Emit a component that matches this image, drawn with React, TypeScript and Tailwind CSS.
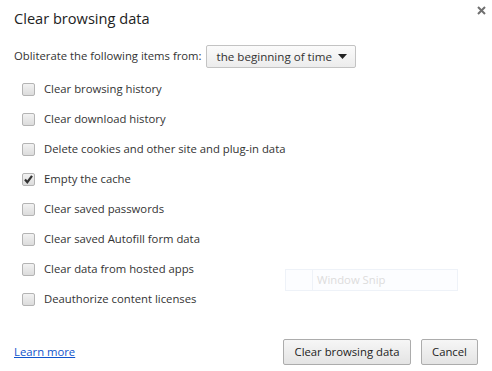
import React from 'react'

const items = [
  { label: 'Clear browsing history', checked: false },
  { label: 'Clear download history', checked: false },
  { label: 'Delete cookies and other site and plug-in data', checked: false },
  { label: 'Empty the cache', checked: true },
  { label: 'Clear saved passwords', checked: false },
  { label: 'Clear saved Autofill form data', checked: false },
  { label: 'Clear data from hosted apps', checked: false },
  { label: 'Deauthorize content licenses', checked: false },
]

function Check({ checked }: { checked: boolean }) {
  return (
    <span className="w-[13px] h-[13px] rounded-[2px] border border-[#b4b4b4] bg-gradient-to-b from-[#f2f2f2] to-[#dcdcdc] flex items-center justify-center shrink-0">
      {checked && (
        <svg width="11" height="11" viewBox="0 0 11 11">
          <path d="M2 5.5 L4.3 8.2 L9 1.8" fill="none" stroke="#333" strokeWidth="2.2" />
        </svg>
      )}
    </span>
  )
}

export default function App() {
  const [checks, setChecks] = React.useState(items.map(i => i.checked))
  return (
    <div className="w-[492px] h-[371px] bg-white relative text-[#333] text-[11.3px] font-['Open_Sans',sans-serif] flex flex-col">
      <button className="absolute right-[5px] top-[4px] w-[12px] h-[12px] flex items-center justify-center">
        <svg width="9" height="9" viewBox="0 0 9 9">
          <path d="M1 1 L8 8 M8 1 L1 8" stroke="#707070" strokeWidth="2" />
        </svg>
      </button>

      <h1 className="text-[14.6px] text-[#222] leading-[20px] pl-[14px] pt-[8px]">Clear browsing data</h1>

      <div className="flex items-center pl-[14px] mt-[17px] h-[23px] gap-[4px]">
        <span>Obliterate the following items from:</span>
        <div className="w-[150px] h-[23px] border border-[#c3c3c3] rounded-[2px] bg-gradient-to-b from-[#fbfbfb] to-[#ececec] flex items-center pl-[10px] pr-[8px] text-[11.6px]">
          <span>the beginning of time</span>
          <svg className="ml-auto" width="9" height="5" viewBox="0 0 9 5">
            <path d="M0 0 L9 0 L4.5 5 Z" fill="#222" />
          </svg>
        </div>
      </div>

      <div className="flex flex-col pl-[22px] mt-[6px]">
        {items.map((it, i) => (
          <label key={it.label} className="h-[30px] flex items-center gap-[9px]" onClick={() => setChecks(c => c.map((v, j) => (j === i ? !v : v)))}>
            <Check checked={checks[i]} />
            <span>{it.label}</span>
          </label>
        ))}
      </div>

      <div className="absolute left-[285px] top-[269px] w-[173px] h-[22px] border border-[#eef2f8] bg-[#fcfdff] flex">
        <div className="w-[27px] border-r border-[#eef2f8]" />
        <span className="pl-[4px] text-[#dcdcdc] leading-[20px]">Window Snip</span>
      </div>

      <div className="mt-auto mb-[6px] flex items-center justify-between pl-[14px] pr-[14px]">
        <a className="text-[#1155cc] underline">Learn more</a>
        <div className="flex gap-[10px]">
          <button className="h-[26px] w-[128px] border border-[#acacac] rounded-[2px] bg-gradient-to-b from-[#f6f6f6] to-[#e4e4e4] text-[#222]">Clear browsing data</button>
          <button className="h-[26px] w-[57px] border border-[#acacac] rounded-[2px] bg-gradient-to-b from-[#f6f6f6] to-[#e4e4e4] text-[#222]">Cancel</button>
        </div>
      </div>
    </div>
  )
}
